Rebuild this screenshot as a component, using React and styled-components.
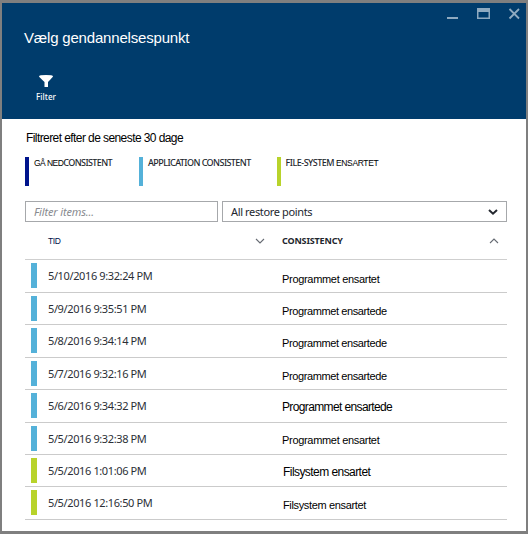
import React from 'react';
import styled, { createGlobalStyle } from 'styled-components';

const Global = createGlobalStyle`
  * { box-sizing: border-box; }
  body { margin: 0; background: #7f7f7f; }
`;

const sans = '"Liberation Sans", Arial, sans-serif';
const noto = '"Noto Sans", "Open Sans", sans-serif';

const Blade = styled.main`
  width: 528px;
  height: 534px;
  display: flex;
  flex-direction: column;
  border-style: solid;
  border-color: #7f7f7f;
  border-width: 3px 2px 3px 2px;
  background: #fff;
`;

const Header = styled.header`
  height: 116px;
  flex: none;
  display: flex;
  flex-direction: column;
  background: #003c6c;
  color: #fff;
`;

const WindowControls = styled.div`
  height: 20px;
  display: flex;
  justify-content: flex-end;
  padding-right: 3px;
`;

const Title = styled.h1`
  margin: 5px 0 0 22px;
  font: 400 15px/20px ${sans};
  letter-spacing: -0.18px;
`;

const FilterButton = styled.button`
  width: 60px;
  margin: 27px 0 0 14px;
  padding: 0;
  display: flex;
  flex-direction: column;
  align-items: center;
  gap: 4px;
  border: 0;
  background: none;
  color: #fff;
  font: 500 8px/12px ${noto};
  letter-spacing: 0.1px;
`;

const Content = styled.section`
  padding: 11px 19px 0 23px;
`;

const Summary = styled.p`
  margin: 0 0 0 1px;
  font: 400 12px/16px ${sans};
  letter-spacing: -0.58px;
  color: #000;
  white-space: nowrap;
`;

const Legend = styled.ul`
  margin: 11px 0 0;
  padding: 0;
  list-style: none;
  display: grid;
  grid-template-columns: 114px 137.5px auto;
`;

const LegendItem = styled.li`
  height: 29px;
  padding-left: 5px;
  border-left: 4.5px solid ${(p) => p.$color};
  font: 500 9px/12px ${noto};
  letter-spacing: ${(p) => p.$track}px;
  color: #23272e;
  white-space: nowrap;
`;

const Translated = styled.span`
  font: 400 8.5px/12px ${sans};
  letter-spacing: ${(p) => p.$track}px;
  color: #000;
`;

const Controls = styled.div`
  margin-top: 15px;
  display: grid;
  grid-template-columns: 193px 285px;
  gap: 4px;
`;

const Field = styled.div`
  height: 21px;
  padding: 0 8px;
  display: flex;
  align-items: center;
  justify-content: space-between;
  border: 1px solid #a6a8ab;
  font: ${(p) => (p.$placeholder ? 'italic' : 'normal')} 400 11px/19px ${noto};
  letter-spacing: ${(p) => (p.$placeholder ? -0.15 : -0.36)}px;
  color: ${(p) => (p.$placeholder ? '#888b90' : '#23272e')};
`;

const columns = '23px 234px 1fr';

const ColumnHeads = styled.div`
  height: 38.4px;
  display: grid;
  grid-template-columns: ${columns};
  align-items: center;
  border-bottom: 1px solid #cfcfcf;
`;

const ColumnHead = styled.div`
  height: 36px;
  padding-right: ${(p) => (p.$bold ? 8 : 17)}px;
  display: flex;
  align-items: center;
  justify-content: space-between;
  font: ${(p) => (p.$bold ? `700 9px/12px ${noto}` : `400 8.5px/12px ${sans}`)};
  letter-spacing: ${(p) => (p.$bold ? -0.15 : -0.4)}px;
  color: ${(p) => (p.$bold ? '#23272e' : '#00104a')};
`;

const Row = styled.div`
  height: 32.43px;
  display: grid;
  grid-template-columns: ${columns};
  border-bottom: 1px solid #cbcbcb;
`;

const Marker = styled.i`
  width: 6px;
  height: 25px;
  margin: 3px 0 0 6px;
  background: ${(p) => p.$color};
`;

const Time = styled.time`
  padding-top: 7px;
  font: 400 11px/18px ${noto};
  letter-spacing: -0.38px;
  color: #2b2f36;
  white-space: nowrap;
`;

const Consistency = styled.span`
  padding: ${(p) => p.$top}px 0 0 ${(p) => p.$indent || 0}px;
  font: 400 ${(p) => p.$size}px/16px ${sans};
  letter-spacing: ${(p) => p.$track}px;
  color: #000;
  white-space: nowrap;
`;

const blue = '#54b1d9';
const green = '#b8d32b';

const rows = [
  { time: '5/10/2016 9:32:24 PM', text: 'Programmet ensartet', color: blue, size: 11, track: -0.31, top: 10.6 },
  { time: '5/9/2016 9:35:51 PM', text: 'Programmet ensartede', color: blue, size: 11, track: -0.39, top: 10 },
  { time: '5/8/2016 9:34:14 PM', text: 'Programmet ensartede', color: blue, size: 11, track: -0.39, top: 9.6 },
  { time: '5/7/2016 9:32:16 PM', text: 'Programmet ensartede', color: blue, size: 11, track: -0.39, top: 10 },
  { time: '5/6/2016 9:34:32 PM', text: 'Programmet ensartede', color: blue, size: 12, track: -0.63, top: 8.6 },
  { time: '5/5/2016 9:32:38 PM', text: 'Programmet ensartet', color: blue, size: 11, track: -0.31, top: 9.6 },
  { time: '5/5/2016 1:01:06 PM', text: 'Filsystem ensartet', color: green, size: 12, track: -0.56, top: 9, indent: 1 },
  { time: '5/5/2016 12:16:50 PM', text: 'Filsystem ensartet', color: green, size: 11, track: -0.35, top: 9.6, indent: 1 },
];

const WindowIcons = () => (
  <svg width="80" height="20" fill="none" stroke="#8faac0">
    <path d="M4 15H15" strokeWidth="2" />
    <path d="M34.75 5.5V15.25H46.25V5.5" strokeWidth="1.5" />
    <path d="M34 7H47" strokeWidth="4" />
    <path d="M66.5 6L76 15.5M76 6L66.5 15.5" strokeWidth="1.8" />
  </svg>
);

const FunnelIcon = () => (
  <svg width="14" height="12" fill="#fff">
    <path d="M0 1.2Q0 0 7 0T14 1.2Q14 2 9 7V12H5.5V7Q0 2 0 1.2Z" />
  </svg>
);

const Chevron = ({ up, bold }) => (
  <svg width="10" height="8" fill="none" stroke={bold ? '#23272e' : '#666b73'} strokeWidth={bold ? 2 : 1.1}>
    <path d={up ? 'M1 6L5 2L9 6' : bold ? 'M1 2L5 5.7L9 2' : 'M1 2L5 6L9 2'} />
  </svg>
);

export default function App() {
  return (
    <>
      <Global />
      <Blade>
        <Header>
          <WindowControls><WindowIcons /></WindowControls>
          <Title>Vælg gendannelsespunkt</Title>
          <FilterButton><FunnelIcon />Filter</FilterButton>
        </Header>
        <Content>
          <Summary>Filtreret efter de seneste 30 dage</Summary>
          <Legend>
            <LegendItem $color="#00148c" $track={-0.6}><Translated $track={-0.55}>GÅ NED</Translated>CONSISTENT</LegendItem>
            <LegendItem $color={blue} $track={-0.57}>APPLICATION CONSISTENT</LegendItem>
            <LegendItem $color={green} $track={-0.5}>FILE-SYSTEM <Translated $track={-0.35}>ENSARTET</Translated></LegendItem>
          </Legend>
          <Controls>
            <Field $placeholder>Filter items...</Field>
            <Field>All restore points<Chevron bold /></Field>
          </Controls>
          <ColumnHeads>
            <span />
            <ColumnHead>TID<Chevron /></ColumnHead>
            <ColumnHead $bold>CONSISTENCY<Chevron up /></ColumnHead>
          </ColumnHeads>
          {rows.map((r) => (
            <Row key={r.time}>
              <Marker $color={r.color} />
              <Time>{r.time}</Time>
              <Consistency $size={r.size} $track={r.track} $top={r.top} $indent={r.indent}>{r.text}</Consistency>
            </Row>
          ))}
        </Content>
      </Blade>
    </>
  );
}
